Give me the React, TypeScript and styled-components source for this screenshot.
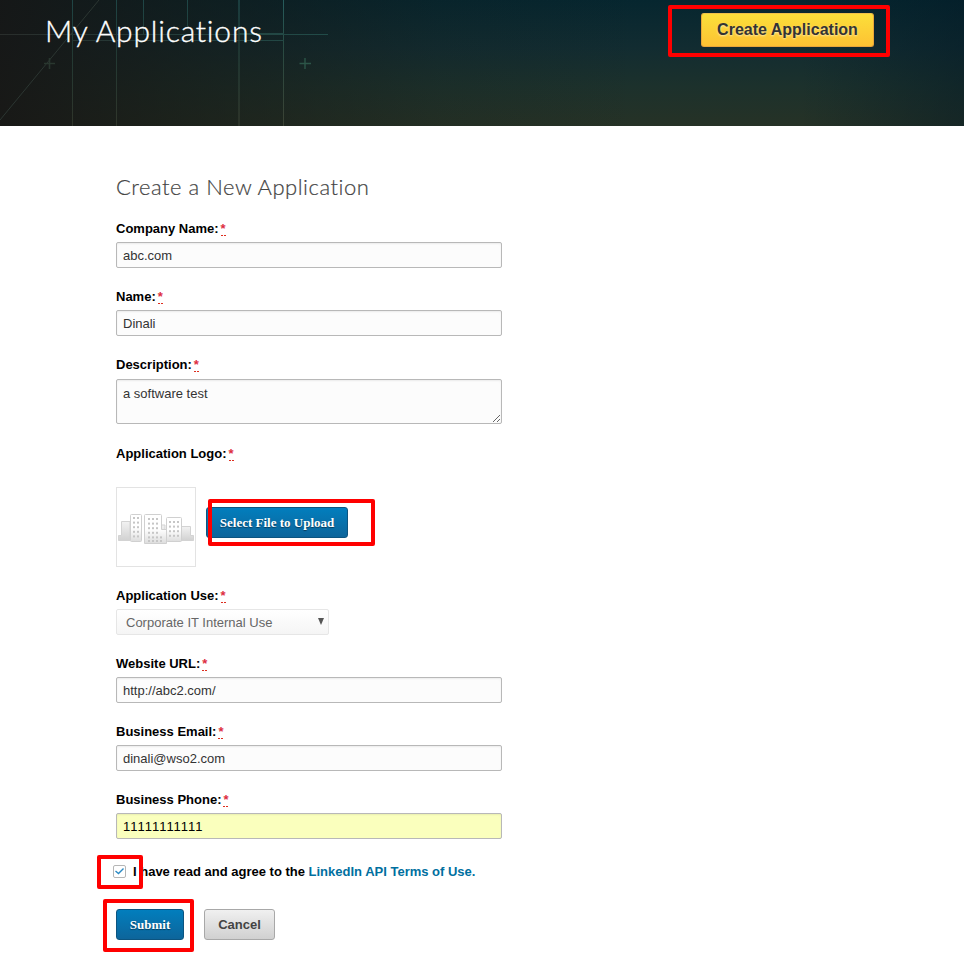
import React from 'react';
import styled, { createGlobalStyle, css } from 'styled-components';

const GlobalStyle = createGlobalStyle`
  * { box-sizing: border-box; }
  body { margin: 0; background: #fff; font: 13px/20px "Liberation Sans", Arial, sans-serif; color: #000; overflow: hidden; }
`;

const Page = styled.div`
  width: 964px;
  height: 957px;
  overflow: hidden;
`;

const Header = styled.header`
  position: relative;
  height: 126px;
  padding: 13px 90px 0 45px;
  display: flex;
  justify-content: space-between;
  align-items: flex-start;
  background:
    linear-gradient(90deg, rgba(23, 22, 21, 0.9) 0, rgba(22, 23, 20, 0.6) 170px, rgba(22, 25, 22, 0.15) 440px, rgba(0, 0, 0, 0) 640px, rgba(0, 0, 0, 0) 800px, rgba(2, 24, 37, 0.45) 964px),
    linear-gradient(180deg, #06262f 0%, #122c31 38%, #1c312c 68%, #263226 100%);
`;

const Blueprint = styled.svg`
  position: absolute;
  left: 0;
  top: 0;
`;

const PageTitle = styled.h1`
  position: relative;
  margin: -1px 0 0;
  font: 300 30px/36px Lato, sans-serif;
  letter-spacing: 0.8px;
  color: #fff;
  -webkit-text-stroke: 0.35px #fff;
  white-space: nowrap;
`;

const Form = styled.form`
  padding: 46px 0 0 116px;
`;

const FormTitle = styled.h2`
  margin: 0 0 17px;
  font: 300 22px/30px Lato, sans-serif;
  letter-spacing: 0.52px;
  color: #444;
  -webkit-text-stroke: 0.2px #444;
`;

const Field = styled.div<{ $gap?: number }>`
  display: flex;
  flex-direction: column;
  align-items: flex-start;
  margin-bottom: ${p => p.$gap ?? 19}px;
`;

const Label = styled.label<{ $gap?: number }>`
  font-weight: bold;
  height: 20px;
  margin-bottom: ${p => p.$gap ?? 3}px;
`;

const Required = styled.abbr`
  margin-left: 2px;
  color: #dd2e3f;
  font-weight: bold;
  text-decoration: none;
  display: inline-block;
  height: 17px;
  line-height: 20px;
  vertical-align: top;
  background: repeating-linear-gradient(90deg, #dd2e1f 0 2px, transparent 2px 3px) left bottom / 100% 1px no-repeat;
`;

const control = css`
  display: block;
  width: 386px;
  margin: 0;
  border: 1px solid #b8b8b8;
  border-radius: 2px;
  background: #fcfcfc;
  box-shadow: inset 0 1px 2px rgba(0, 0, 0, 0.07);
  color: #333;
  font: 13px/16px "Liberation Sans", Arial, sans-serif;
  font-kerning: none;
  outline: none;
`;

const Input = styled.input<{ $filled?: boolean }>`
  ${control}
  height: 26px;
  padding: 1px 6px 0;
  ${p => p.$filled && css`background: #faffbd; color: #000;`}
`;

const TextArea = styled.textarea`
  ${control}
  height: 45px;
  padding: 6px;
  resize: vertical;
  overflow: hidden;
`;

const SelectBox = styled.div`
  width: 213px;
  height: 26px;
  padding: 1px 4px 0 9px;
  display: flex;
  align-items: center;
  justify-content: space-between;
  border: 1px solid #e6e6e6;
  border-radius: 2px;
  background: linear-gradient(#fff, #f5f5f5);
  color: #666;

  span { position: relative; top: 0.5px; }
  svg { margin-bottom: 3px; }
`;

const UploadRow = styled.div`
  display: flex;
  align-items: flex-start;
  gap: 10px;
  padding-top: 20px;
  height: 100px;

  button { margin-top: 20px; }
`;

const LogoFrame = styled.div`
  width: 80px;
  height: 80px;
  border: 1px solid #e3e3e3;
  background: #fff;
`;

const Button = styled.button<{ $tone: 'gold' | 'blue' | 'grey'; $width: number }>`
  width: ${p => p.$width}px;
  height: ${p => (p.$tone === 'gold' ? 34 : 31)}px;
  padding: 0;
  border-radius: 3px;
  white-space: nowrap;
  ${p => p.$tone === 'gold' && css`
    position: relative;
    border: 1px solid #e9a63a;
    border-top-color: #f0c04a;
    background: linear-gradient(#fbdf3a, #fdc233);
    color: #333;
    font: bold 16px/30px "Liberation Sans", Arial, sans-serif;
    text-shadow: 0 1px 2px rgba(255, 255, 255, 0.6);
  `}
  ${p => p.$tone === 'blue' && css`
    border: 1px solid #0c5480;
    background: linear-gradient(#027ebd, #0d659b);
    color: #fff;
    font: bold 13px/29px "Liberation Serif", "Times New Roman", serif;
    text-shadow: 0 1px 1px rgba(0, 0, 0, 0.45);
  `}
  ${p => p.$tone === 'grey' && css`
    border: 1px solid #a8a8a8;
    background: linear-gradient(#f0f0f0, #d0d0d0);
    color: #444;
    font: bold 13px/29px "Liberation Sans", Arial, sans-serif;
  `}
`;

const Agreement = styled.div`
  display: flex;
  align-items: center;
  height: 20px;
  margin: 23px 0 27px -3px;
  font-weight: bold;
  white-space: pre;
`;

const CheckBox = styled.span`
  display: flex;
  align-items: center;
  justify-content: center;
  width: 13px;
  height: 13px;
  margin: -2px 7px 0 0;
  border: 1px solid #b6b6b6;
  border-radius: 2px;
  background: #fff;
`;

const TermsLink = styled.a`
  color: #006fa0;
  text-decoration: none;
`;

const Actions = styled.div`
  display: flex;
  gap: 20px;
`;

const Highlight = styled.div<{ $x: number; $y: number; $w: number; $h: number }>`
  position: absolute;
  left: ${p => p.$x}px;
  top: ${p => p.$y}px;
  width: ${p => p.$w}px;
  height: ${p => p.$h}px;
  border: 4px solid #f00;
  border-radius: 2px;
  pointer-events: none;
`;

const Backdrop = () => (
  <Blueprint width="340" height="126" fill="none">
    <defs>
      <linearGradient id="fade" x1="0" y1="0" x2="0" y2="126" gradientUnits="userSpaceOnUse">
        <stop offset="0" stopColor="#265c5c" />
        <stop offset="0.35" stopColor="#284b43" />
        <stop offset="1" stopColor="#3b4234" />
      </linearGradient>
      <linearGradient id="across" x1="0" y1="0" x2="328" y2="0" gradientUnits="userSpaceOnUse">
        <stop offset="0" stopColor="#292d2b" />
        <stop offset="1" stopColor="#214c49" />
      </linearGradient>
    </defs>
    <g fill="url(#fade)">
      <path d="M72 0H73V126H72ZM116 0H117V126H116Z" opacity=".65" />
      <path d="M143 0H144V34H143ZM187 0H188V26H187Z" opacity=".65" />
      <path d="M283 0H284V126H283Z" />
      <path d="M238 0H240V126H238Z" opacity=".5" />
    </g>
    <g fill="url(#across)">
      <path d="M0 34H328V35H0Z" />
      <path d="M72 40H284V41H72Z" />
      <path d="M239 33H284V35H239Z" />
    </g>
    <path d="M0 120L99 0" stroke="#2c3632" />
    <path d="M44 63.5H55M49.5 58V69" stroke="#29372f" strokeWidth="1.6" />
    <path d="M299.5 63.5H311M305 58V69" stroke="#2c5548" strokeWidth="1.4" />
  </Blueprint>
);

const Windows = ({ x, y, cols, rows }: { x: number; y: number; cols: number; rows: number }) => (
  <>
    {Array.from({ length: cols * rows }, (_, i) => (
      <rect key={i} x={x + (i % cols) * 4} y={y + Math.floor(i / cols) * 4.6} width="2" height="2" fill="#c6c6c6" />
    ))}
  </>
);

const Buildings = () => (
  <svg width="78" height="78" viewBox="0 0 78 78">
    <defs>
      <linearGradient id="wall" x1="0" y1="0" x2="0" y2="1">
        <stop offset="0" stopColor="#f2f2f2" />
        <stop offset="1" stopColor="#d1d1d1" />
      </linearGradient>
      <linearGradient id="tower" x1="0" y1="0" x2="0" y2="1">
        <stop offset="0.5" stopColor="#fff" />
        <stop offset="1" stopColor="#ddd" />
      </linearGradient>
    </defs>
    <g stroke="#d3d3d3" fill="url(#wall)">
      <path d="M1.5 47.5H4.5V33.5H13V52.5H1.5Z" />
      <path d="M62 38.5H73.5V47.5H76.5V52.5H62Z" />
      <path d="M44 37H48V52.5H44Z" />
    </g>
    <g stroke="#d0d0d0" fill="url(#tower)">
      <rect x="13.5" y="26.5" width="11" height="27" rx="1" />
      <rect x="49.5" y="29.5" width="15" height="24" rx="1" />
      <path d="M27.5 55.5V27.5Q27.5 26.5 28.5 26.5H43.5Q44.5 26.5 44.5 27.5V41.5H49.5V55.5Z" />
    </g>
    <Windows x={16} y={29} cols={2} rows={5} />
    <Windows x={31} y={30} cols={3} rows={4} />
    <Windows x={31} y={48.4} cols={4} rows={1} />
    <Windows x={31} y={52} cols={4} rows={1} />
    <Windows x={52} y={33} cols={3} rows={4} />
  </svg>
);

const FieldLabel = ({ text, gap }: { text: string; gap?: number }) => (
  <Label $gap={gap}>{text}:<Required>*</Required></Label>
);

const TextField = ({ label, value, filled, gap }: { label: string; value: string; filled?: boolean; gap?: number }) => (
  <Field $gap={gap}>
    <FieldLabel text={label} />
    <Input defaultValue={value} $filled={filled} />
  </Field>
);

export default function App() {
  return (
    <Page>
      <GlobalStyle />
      <Header>
        <Backdrop />
        <PageTitle>My Applications</PageTitle>
        <Button $tone="gold" $width={173}>Create Application</Button>
      </Header>
      <Form onSubmit={e => e.preventDefault()}>
        <FormTitle>Create a New Application</FormTitle>
        <TextField label="Company Name" value="abc.com" />
        <TextField label="Name" value="Dinali" />
        <Field $gap={20}>
          <FieldLabel text="Description" gap={4} />
          <TextArea defaultValue="a software test" />
        </Field>
        <Field>
          <FieldLabel text="Application Logo" />
          <UploadRow>
            <LogoFrame><Buildings /></LogoFrame>
            <Button type="button" $tone="blue" $width={142}>Select File to Upload</Button>
          </UploadRow>
        </Field>
        <Field>
          <FieldLabel text="Application Use" />
          <SelectBox>
            <span>Corporate IT Internal Use</span>
            <svg width="6" height="7"><path d="M0 0H6L3 7Z" fill="#555" /></svg>
          </SelectBox>
        </Field>
        <TextField label="Website URL" value="http://abc2.com/" />
        <TextField label="Business Email" value="dinali@wso2.com" />
        <TextField label="Business Phone" value="11111111111" filled gap={0} />
        <Agreement>
          <CheckBox>
            <svg width="9" height="8" fill="none"><path d="M0.5 4L3.5 6.5L8.5 1.5" stroke="#2b8ac4" strokeWidth="1.4" /></svg>
          </CheckBox>
          I have read and agree to the <TermsLink href="#">LinkedIn API Terms of Use.</TermsLink>
        </Agreement>
        <Actions>
          <Button $tone="blue" $width={68}>Submit</Button>
          <Button type="button" $tone="grey" $width={71}>Cancel</Button>
        </Actions>
      </Form>
      <Highlight $x={668} $y={5} $w={222} $h={52} />
      <Highlight $x={208} $y={499} $w={167} $h={47} />
      <Highlight $x={97} $y={855} $w={46} $h={34} />
      <Highlight $x={103} $y={899} $w={91} $h={53} />
    </Page>
  );
}
